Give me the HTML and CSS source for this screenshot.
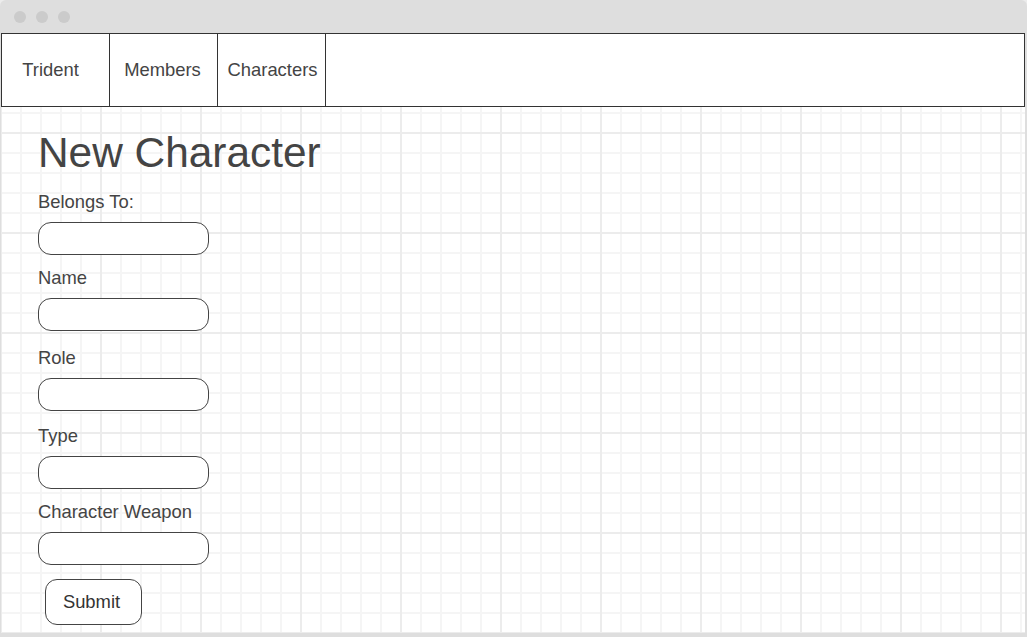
FILE: index.html
```html
<!DOCTYPE html>
<html lang="en">
<head>
<meta charset="utf-8">
<title>New Character</title>
<link rel="stylesheet" href="styles.css">
</head>
<body>
<div class="window">
  <div class="titlebar">
    <span class="dot"></span>
    <span class="dot"></span>
    <span class="dot"></span>
  </div>
  <div class="content">
    <nav class="nav">
      <a class="nav-item nav-item--brand" href="#">Trident</a>
      <a class="nav-item" href="#">Members</a>
      <a class="nav-item nav-item--last" href="#">Characters</a>
    </nav>
    <form class="form">
      <h1 class="title">New Character</h1>
      <label class="label">Belongs To:</label>
      <input class="field" type="text">
      <label class="label">Name</label>
      <input class="field" type="text">
      <label class="label label--gap-l">Role</label>
      <input class="field" type="text">
      <label class="label label--gap-m">Type</label>
      <input class="field" type="text">
      <label class="label">Character Weapon</label>
      <input class="field" type="text">
      <button class="submit" type="button">Submit</button>
    </form>
  </div>
</div>
</body>
</html>
```

FILE: styles.css
```css
* { box-sizing: border-box; }

html, body {
  margin: 0;
  padding: 0;
  background: #ececec;
}

body {
  font-family: "Liberation Sans", Arial, sans-serif;
  color: #444;
}

.window {
  width: 1027px;
  height: 637px;
  background: #dedede;
  border-radius: 6px 6px 0 0;
  padding: 0 2px 4px 1px;
  display: flex;
  flex-direction: column;
  overflow: hidden;
}

.titlebar {
  height: 33px;
  flex: 0 0 33px;
  display: flex;
  align-items: center;
  gap: 10px;
  padding-left: 13px;
}

.dot {
  width: 12px;
  height: 12px;
  border-radius: 50%;
  background: #cbcbcb;
}

.content {
  flex: 1;
  width: 1024px;
  background-color: #fff;
  background-image:
    linear-gradient(to right, #ececec 0, #ececec 2px, transparent 2px),
    linear-gradient(to bottom, #ececec 0, #ececec 2px, transparent 2px),
    linear-gradient(to right, #f5f5f5 0, #f5f5f5 2px, transparent 2px),
    linear-gradient(to bottom, #f5f5f5 0, #f5f5f5 2px, transparent 2px);
  background-size: 100px 100px, 100px 100px, 20px 20px, 20px 20px;
  background-position: -1px -1px;
  display: flex;
  flex-direction: column;
}

.nav {
  height: 74px;
  border: 1px solid #333;
  background: #fff;
  display: flex;
}

.nav-item {
  width: 108px;
  border-right: 1px solid #333;
  display: flex;
  align-items: center;
  justify-content: center;
  font-size: 18.4px;
  color: #444;
  text-decoration: none;
  padding-right: 2px;
}

.nav-item--brand {
  padding-right: 10px;
}

.nav-item--last {
  padding-right: 0;
  padding-left: 2px;
}

.form {
  display: flex;
  flex-direction: column;
  align-items: flex-start;
  padding: 22px 0 0 37px;
}

.title {
  margin: 0 0 14px 0;
  font-size: 42.4px;
  line-height: 48px;
  font-weight: normal;
  color: #444;
}

.label {
  font-size: 18.4px;
  line-height: 21px;
  height: 21px;
  margin: 0 0 10px 0;
  color: #444;
}

.field + .label {
  margin-top: 12px;
}

.field + .label--gap-l {
  margin-top: 16px;
}

.field + .label--gap-m {
  margin-top: 14px;
}

.field {
  width: 171px;
  height: 33px;
  margin-left: 0;
  border: 1px solid #444;
  border-radius: 13px;
  background: #fff;
  font: inherit;
}

.submit {
  margin: 14px 0 0 7px;
  width: 97px;
  height: 46px;
  border: 1px solid #444;
  border-radius: 12px;
  background: #fff;
  font-family: "Liberation Sans", Arial, sans-serif;
  font-size: 18.4px;
  color: #333;
  padding: 0 4px 0 0;
}
```
